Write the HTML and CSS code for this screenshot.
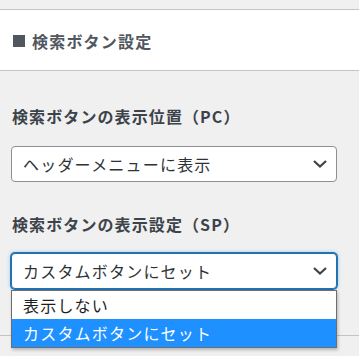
FILE: index.html
```html
<!DOCTYPE html>
<html lang="ja">
<head>
<meta charset="utf-8">
<link rel="stylesheet" href="styles.css">
</head>
<body>
<div class="top"></div>
<div class="header"><span class="sq"></span><span class="title">検索ボタン設定</span></div>
<div class="content">
  <div class="field">
    <div class="label">検索ボタンの表示位置（PC）</div>
    <div class="select">
      <span class="value">ヘッダーメニューに表示</span>
      <svg class="chev" width="16" height="10" viewBox="0 0 16 10"><path d="M2 2 L8 7.5 L14 2" fill="none" stroke="#3c434a" stroke-width="2.2"/></svg>
    </div>
  </div>
  <div class="field second">
    <div class="label">検索ボタンの表示設定（SP）</div>
    <div class="select focus">
      <span class="value">カスタムボタンにセット</span>
      <svg class="chev" width="16" height="10" viewBox="0 0 16 10"><path d="M2 2 L8 7.5 L14 2" fill="none" stroke="#3c434a" stroke-width="2.2"/></svg>
    </div>
  </div>
</div>
<div class="divider"></div>
<div class="dropdown">
  <div class="option">表示しない</div>
  <div class="option selected">カスタムボタンにセット</div>
</div>
</body>
</html>
```
FILE: styles.css
```css
html, body {
  margin: 0;
  padding: 0;
}
body {
  background: #f0f0f1;
  font-family: "Noto Sans CJK JP", "Noto Sans", sans-serif;
  color: #3c434a;
  width: 359px;
  height: 356px;
  overflow: hidden;
  position: relative;
}
.top {
  height: 9px;
  border-bottom: 1px solid #c3c4c7;
}
.header {
  background: #fff;
  height: 61px;
  border-bottom: 1px solid #c3c4c7;
  display: flex;
  align-items: center;
  padding-left: 13px;
  padding-top: 2px;
  box-sizing: border-box;
}
.sq {
  width: 12px;
  height: 12px;
  background: #50575e;
  margin-right: 7px;
}
.title {
  font-size: 16px;
  font-weight: bold;
  color: #50575e;
  letter-spacing: 1.2px;
}
.content {
  padding: 33px 22px 0 11px;
}
.label {
  font-size: 16px;
  font-weight: bold;
  line-height: 24px;
  letter-spacing: 1.1px;
  padding-left: 1px;
  color: #3c434a;
}
.select {
  margin-top: 18px;
  height: 36px;
  box-sizing: border-box;
  border: 1px solid #8c8f94;
  border-radius: 4px;
  background: #fff;
  display: flex;
  align-items: center;
  justify-content: space-between;
  padding: 0 8px 0 11px;
  font-size: 16px;
  letter-spacing: 1.2px;
  color: #2c3338;
}
.second {
  margin-top: 30px;
}
.second .select {
  margin-top: 17px;
}
.select.focus {
  border-color: #2271b1;
  box-shadow: 0 0 0 1px #2271b1, 0 0 3px 2px rgba(100, 180, 230, 0.35);
}
.chev {
  display: block;
}
.divider {
  margin-top: 46px;
  border-top: 1px solid #c3c4c7;
}
.dropdown {
  position: absolute;
  left: 11px;
  top: 290px;
  width: 326px;
  box-sizing: border-box;
  border: 1px solid #6e6e6e;
  background: #fff;
  box-shadow: 1px 2px 3px rgba(0, 0, 0, 0.25);
  font-size: 16px;
  letter-spacing: 1.2px;
  color: #1e1e1e;
}
.option {
  height: 28px;
  line-height: 28px;
  padding-left: 11px;
}
.option.selected {
  background: #1e90ff;
  color: #fff;
}
```
